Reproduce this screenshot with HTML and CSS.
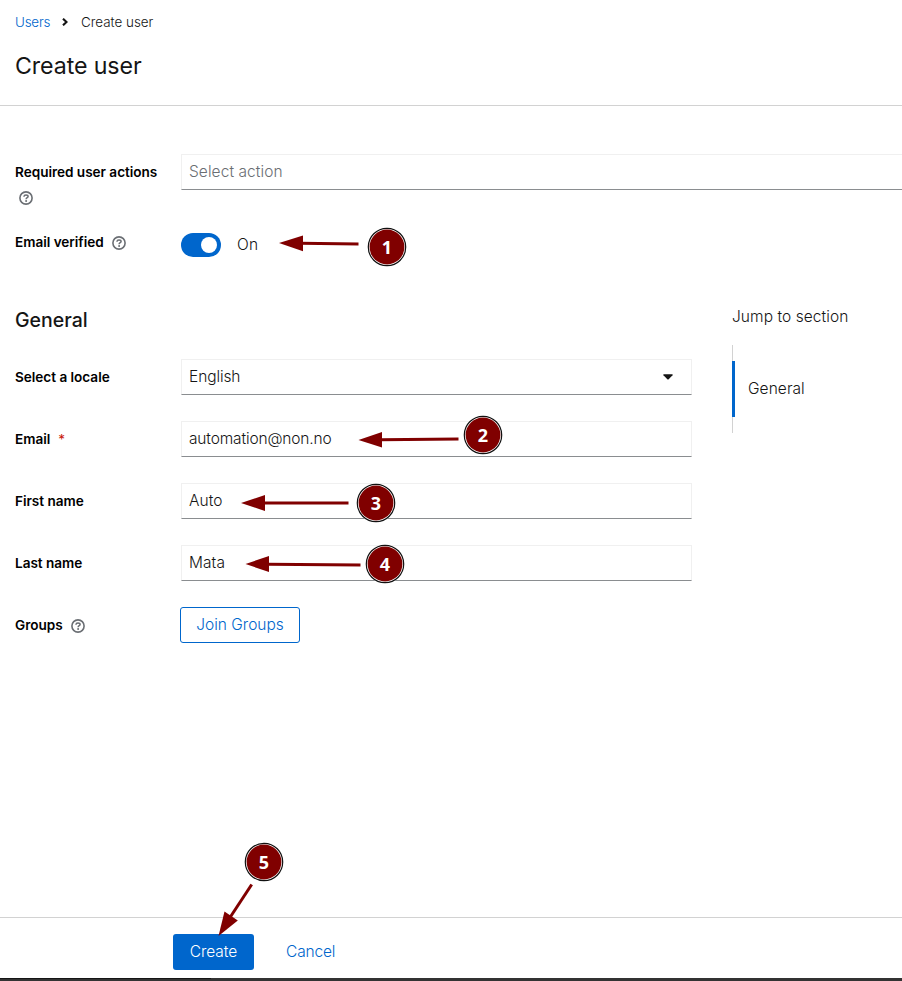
FILE: index.html
```html
<!DOCTYPE html>
<html lang="en">
<head>
<meta charset="utf-8">
<title>Create user</title>
<link rel="stylesheet" href="styles.css">
</head>
<body>
<svg class="defs" width="0" height="0" aria-hidden="true">
  <symbol id="help" viewBox="0 0 14 14">
    <circle cx="7" cy="7" r="6.1" fill="none" stroke="currentColor" stroke-width="1.6"/>
    <path d="M4.900 5.800C5 4.500 6 4 7 4s2.100.6 2.100 1.600C9.100 6.800 7.100 6.700 7.100 8.200" fill="none" stroke="currentColor" stroke-width="1.5"/>
    <circle cx="7.100" cy="9.900" r="1" fill="currentColor"/>
  </symbol>
</svg>
<div class="page">
  <header class="header">
    <nav class="breadcrumb">
      <a class="link users" href="#">Users</a>
      <svg class="chevron" width="6" height="8" viewBox="0 0 6 8"><path d="M1 .7 4.500 4 1 7.300" fill="none" stroke="currentColor" stroke-width="2.100"/></svg>
      <span class="current">Create user</span>
    </nav>
    <h1 class="title">Create user</h1>
  </header>
  <main class="main">
    <section class="top-form">
      <div class="row row-actions">
        <div class="label"><span>Required user actions</span><svg class="help below"><use href="#help"/></svg></div>
        <div class="field placeholder"><span>Select action</span></div>
      </div>
      <div class="row row-verified">
        <div class="label"><span>Email verified</span><svg class="help"><use href="#help"/></svg></div>
        <div class="switch-wrap"><span class="switch"><span class="knob"></span></span><span class="on">On</span></div>
      </div>
    </section>
    <div class="columns">
      <section class="general">
        <h2 class="section-title">General</h2>
        <div class="row"><div class="label"><span>Select a locale</span></div>
          <div class="field"><span class="locale">English</span><svg class="caret" width="10" height="6" viewBox="0 0 10 6"><path d="M.7.3H9.300Q10 .5 9.500 1.200L5.700 5.200Q5 5.800 4.300 5.200L.5 1.200Q0 .5.7.3Z" fill="currentColor"/></svg></div></div>
        <div class="row"><div class="label"><span>Email</span><span class="required">*</span></div>
          <div class="field"><span class="address">automation@non.no</span></div></div>
        <div class="row"><div class="label"><span>First name</span></div>
          <div class="field"><span>Auto</span></div></div>
        <div class="row"><div class="label"><span>Last name</span></div>
          <div class="field"><span>Mata</span></div></div>
        <div class="row"><div class="label"><span>Groups</span><svg class="help"><use href="#help"/></svg></div>
          <button class="join"><span>Join Groups</span></button></div>
      </section>
      <aside class="jump">
        <div class="jump-title">Jump to section</div>
        <div class="jump-list"><a class="jump-item" href="#"><span>General</span></a></div>
      </aside>
    </div>
  </main>
  <footer class="footer">
    <button class="create"><span>Create</span></button>
    <a class="link cancel" href="#">Cancel</a>
  </footer>
  <div class="bottom-edge"><span class="edge-tab"></span></div>
  <svg class="annotations" width="902" height="981" viewBox="0 0 902 981">
    <defs>
      <g id="disc"><circle r="19.500" fill="#fff"/><circle r="18.700" fill="none" stroke="#111" stroke-width="1.200"/><circle r="17.400" fill="#800000"/></g>
    </defs>
    <g stroke="#800000" stroke-width="3">
      <path d="M358.500 244 300 243.300"/><path d="M458.500 438.900 380 439.800"/><path d="M348.500 503H263"/><path d="M360.500 565 267 564.200"/><path d="M251.700 884.500 229 919"/>
    </g>
    <g fill="#800000">
      <path d="M279 243 303 235.500V251.200Z"/><path d="M358.500 440 382 432V447.500Z"/><path d="M241 503 265 495V511Z"/><path d="M245.500 564 269 556V572Z"/><path d="M218.500 936 224.500 911.500 237.800 920.500Z"/>
    </g>
    <g class="numbers">
      <use href="#disc" x="387" y="247"/><text x="387" y="253.500">1</text>
      <use href="#disc" x="483" y="435"/><text x="483" y="441.500">2</text>
      <use href="#disc" x="376" y="503"/><text x="376" y="509.500">3</text>
      <use href="#disc" x="385" y="564"/><text x="385" y="570.500">4</text>
      <use href="#disc" x="264" y="862"/><text x="264" y="868.500">5</text>
    </g>
  </svg>
</div>
</body>
</html>
```
FILE: styles.css
```css
* { box-sizing: border-box; }
body { margin: 0; background: #fff; color: #151515; font: 350 15.5px/24px Inter, "Liberation Sans", sans-serif; overflow: hidden; }
.defs { position: absolute; }
.page { position: relative; display: flex; flex-direction: column; width: 902px; height: 981px; overflow: hidden; }
a { text-decoration: none; color: inherit; }
.link { color: #06c; }
span { white-space: nowrap; }
.header { height: 106px; padding: 11px 15px 0; border-bottom: 1px solid #d2d2d2; }
.breadcrumb { display: flex; align-items: center; height: 21px; font-size: 13.4px; }
.users { width: 47px; letter-spacing: -.2px; }
.chevron { margin-right: 13px; }
.title { margin: 18px 0 0; font-size: 23.2px; line-height: 32px; font-weight: 400; letter-spacing: -.1px; }
.main { flex: 1; }
.top-form { padding-top: 48px; }
.row { display: flex; height: 36px; margin: 0 0 26px 15px; }
.row-actions { margin-bottom: 37px; }
.row-verified { height: 36px; margin-bottom: 0; }
.label { width: 166px; flex: none; padding-top: 8px; font-size: 13.6px; line-height: 21px; font-weight: 600; letter-spacing: -.03px; color: #000; }
.label > span:first-child { display: inline-block; }
.help { width: 14px; height: 14px; margin-left: 8px; vertical-align: -3px; color: #6a6e73; }
.help.below { display: block; margin: 8px 0 0 4px; }
.row-verified .label { padding-top: 5px; }
.row-verified .help { vertical-align: -2.5px; }
.field { display: flex; align-items: center; width: 511px; height: 36px; padding: 0 8px 1px 7px; border: 1px solid #f0f0f0; border-bottom-color: #8a8d90; letter-spacing: .07px; }
.placeholder { width: 730px; flex: none; color: #6a6e73; }
.locale { letter-spacing: -.1px; }
.address { letter-spacing: -.15px; }
.caret { margin: 0 10px 0 auto; }
.required { margin-left: 8px; color: #c9190b; font-weight: 400; }
.switch-wrap { display: flex; align-items: center; height: 36px; }
.switch { width: 40px; height: 24px; padding: 4px 4px 4px 20px; border-radius: 12px; background: #06c; }
.knob { display: block; width: 16px; height: 16px; border-radius: 50%; background: #fff; }
.on { margin-left: 16px; letter-spacing: .2px; }
.columns { display: flex; padding-top: 41px; }
.general { width: 692px; }
.section-title { margin: 0 0 23px 15px; height: 32px; font-size: 19.5px; line-height: 32px; font-weight: 500; }
.join { width: 120px; height: 36px; margin-left: -1px; padding: 0 0 1px; border: 1px solid #06c; border-radius: 3px; background: #fff; color: #06c; font: inherit; }
.jump { margin-left: 40px; letter-spacing: .07px; }
.jump-title { line-height: 24px; margin-top: 1px; }
.jump-list { width: 120px; height: 88px; margin-top: 16px; padding: 16px 0; border-left: 1px solid #d2d2d2; }
.jump-item { display: flex; align-items: center; height: 56px; margin-left: -1px; padding: 0 0 1px 13px; border-left: 3px solid #06c; }
.footer { display: flex; height: 61px; padding: 16px 0 0 173px; border-top: 1px solid #d2d2d2; }
.create { width: 81px; height: 36px; padding: 0 0 1px; border: 0; border-radius: 3px; background: #06c; color: #fff; font: inherit; }
.cancel { margin-left: 32px; line-height: 35px; letter-spacing: -.15px; }
.bottom-edge { height: 3px; background: #333; }
.edge-tab { display: block; width: 211px; height: 3px; border-top: 1px solid #151515; }
.annotations { position: absolute; left: 0; top: 0; pointer-events: none; }
.numbers { fill: #fff; font: 700 18px "Noto Sans", "Open Sans", sans-serif; text-anchor: middle; }
```
